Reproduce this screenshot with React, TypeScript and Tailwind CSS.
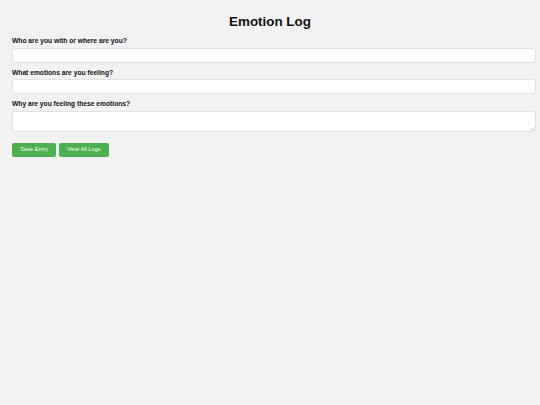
import React from "react";

export default function App() {
  return (
    <div
      className="w-[540px] h-[405px] bg-[#f2f2f2] px-[12px] overflow-hidden"
      style={{ fontFamily: '"Liberation Sans", Arial, sans-serif' }}
    >
      <h1 className="pt-[12.5px] text-center text-[13.4px] leading-[17px] font-bold text-[#111]">Emotion Log</h1>
      <form className="mt-[7.5px]" onSubmit={(e) => e.preventDefault()}>
        <label className="block text-[6.7px] leading-[8px] font-bold text-[#111] mb-[2.5px]">
          Who are you with or where are you?
        </label>
        <input
          type="text"
          className="block w-[524px] h-[15px] bg-white border border-[#e2e2e2] rounded-[3px] mb-[6px] outline-none"
        />
        <label className="block text-[6.7px] leading-[8px] font-bold text-[#111] mb-[2.5px]">
          What emotions are you feeling?
        </label>
        <input
          type="text"
          className="block w-[524px] h-[15px] bg-white border border-[#e2e2e2] rounded-[3px] mb-[6px] outline-none"
        />
        <label className="block text-[6.7px] leading-[8px] font-bold text-[#111] mb-[2.5px]">
          Why are you feeling these emotions?
        </label>
        <div className="relative w-[524px] h-[21px]">
          <textarea className="block w-[524px] h-[21px] bg-white border border-[#e2e2e2] rounded-[3px] outline-none resize-none" />
          <svg className="absolute right-[1px] bottom-[1px]" width="5" height="5" viewBox="0 0 5 5">
            <path d="M1 5 L5 1 M3 5 L5 3" stroke="#c4c4c4" strokeWidth="0.8" />
          </svg>
        </div>
        <div className="flex gap-[2.5px] mt-[11px]">
          <button
            type="button"
            className="h-[14.5px] px-[8.2px] bg-[#4caf50] text-[#f4fbf4] text-[5.7px] leading-none rounded-[2px]"
          >
            Save Entry
          </button>
          <button
            type="button"
            className="h-[14.5px] px-[8.2px] bg-[#4caf50] text-[#f4fbf4] text-[5.7px] leading-none rounded-[2px]"
          >
            View All Logs
          </button>
        </div>
      </form>
    </div>
  );
}
